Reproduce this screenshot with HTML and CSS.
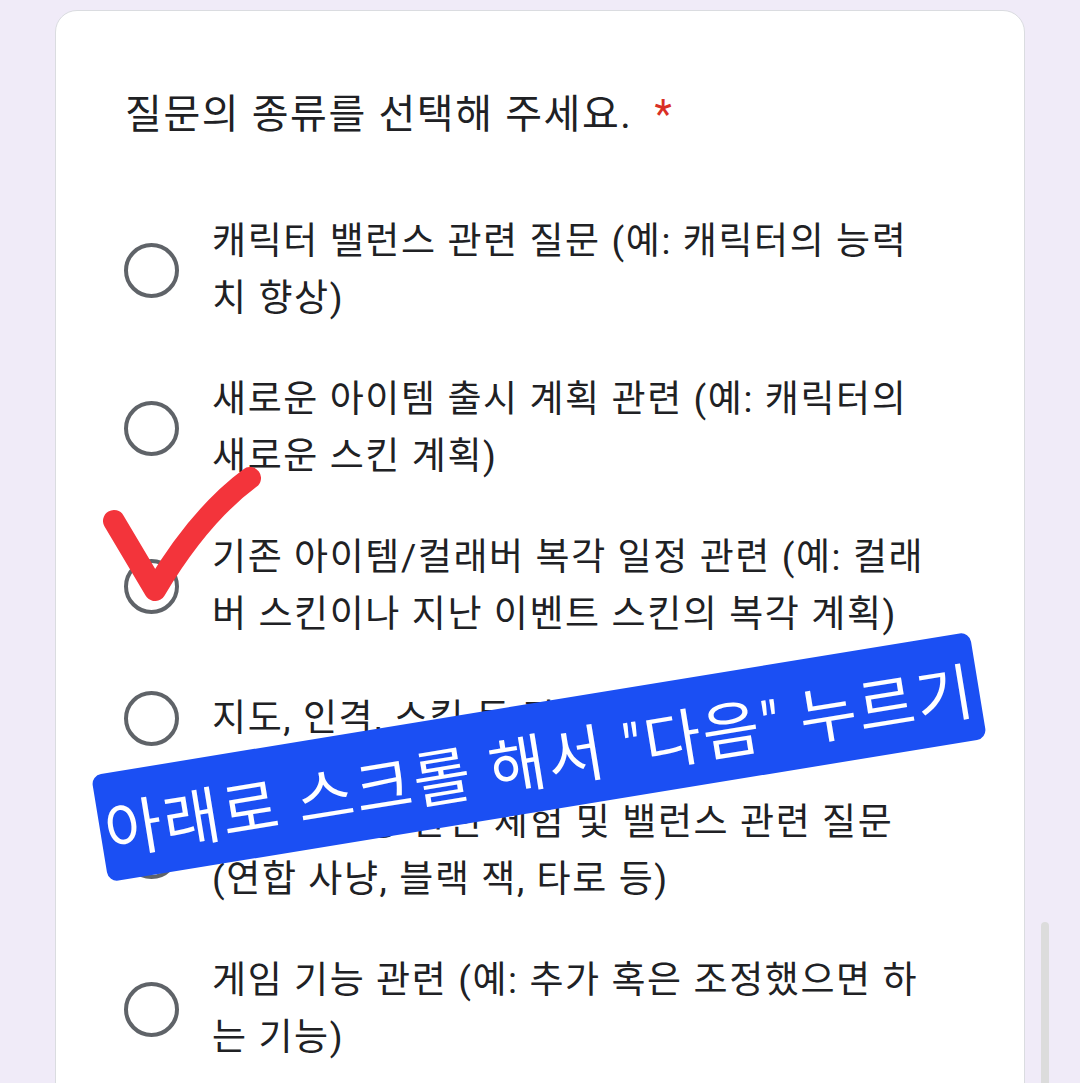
FILE: index.html
```html
<!DOCTYPE html>
<html lang="ko">
<head>
    <meta charset="UTF-8">
    <meta name="viewport" content="width=device-width, initial-scale=1.0">
    <title>질문 종류 선택</title>
    <link rel="stylesheet" href="styles.css">
</head>
<body>
    <div class="page">
        <div class="card">
            <div class="question-title">
                질문의 종류를 선택해 주세요.<span class="required">*</span>
            </div>

            <div class="options">
                <label class="option">
                    <span class="radio"></span>
                    <span class="option-text">캐릭터 밸런스 관련 질문 (예: 캐릭터의 능력치 향상)</span>
                </label>
                <label class="option">
                    <span class="radio"></span>
                    <span class="option-text">새로운 아이템 출시 계획 관련 (예: 캐릭터의 새로운 스킨 계획)</span>
                </label>
                <label class="option">
                    <span class="radio"></span>
                    <span class="option-text">기존 아이템/컬래버 복각 일정 관련 (예: 컬래버 스킨이나 지난 이벤트 스킨의 복각 계획)</span>
                </label>
                <label class="option">
                    <span class="radio"></span>
                    <span class="option-text">지도, 인격, 스킬 등 관련 질문</span>
                </label>
                <label class="option">
                    <span class="radio"></span>
                    <span class="option-text">미니게임 등 관련 체험 및 밸런스 관련 질문 (연합 사냥, 블랙 잭, 타로 등)</span>
                </label>
                <label class="option">
                    <span class="radio"></span>
                    <span class="option-text">게임 기능 관련 (예: 추가 혹은 조정했으면 하는 기능)</span>
                </label>
            </div>
        </div>

        <!-- 손으로 그린 체크 표시 -->
        <svg class="check-mark" width="300" height="200" viewBox="0 0 300 200">
            <path d="M114 71 L155 140 C 180 98, 212 56, 250 28"
                  fill="none" stroke="#f3343b" stroke-width="22" stroke-linecap="round" stroke-linejoin="round"/>
        </svg>

        <!-- 안내 배너 -->
        <div class="banner">아래로 스크롤 해서 "다음" 누르기</div>

        <div class="scrollbar"></div>
    </div>
</body>
</html>
```

FILE: styles.css
```css
* {
    margin: 0;
    padding: 0;
    box-sizing: border-box;
}

body {
    font-family: Roboto, "Noto Sans CJK KR", sans-serif;
    background-color: #f0ebf8;
    color: #202124;
    overflow: hidden;
}

.page {
    position: relative;
    width: 1080px;
    height: 1083px;
    overflow: hidden;
}

.card {
    margin: 10px 0 0 55px;
    width: 970px;
    height: 1200px;
    background-color: #fff;
    border: 1px solid #dadce0;
    border-radius: 22px;
    padding: 76px 96px 0 68px;
}

.question-title {
    font-size: 40px;
    line-height: 56px;
    letter-spacing: 1.6px;
    padding-left: 1px;
}

.required {
    color: #d93025;
    margin-left: 22px;
}

.options {
    display: flex;
    flex-direction: column;
    gap: 44px;
    margin-top: 70px;
}

.option {
    display: flex;
    align-items: center;
    gap: 33px;
    min-height: 63px;
}

.radio {
    flex: 0 0 55px;
    width: 55px;
    height: 55px;
    border: 4.5px solid #5f6368;
    border-radius: 50%;
}

.option-text {
    font-size: 37px;
    line-height: 57px;
    letter-spacing: 1.6px;
}

.check-mark {
    position: absolute;
    left: 0;
    top: 450px;
    filter: blur(0.6px);
}

.banner {
    position: absolute;
    left: 94px;
    top: 703px;
    width: 890px;
    height: 108px;
    background-color: #1b4ff3;
    border-radius: 10px;
    transform: rotate(-9.3deg);
    display: flex;
    align-items: center;
    justify-content: center;
    color: #fff;
    font-size: 62px;
    letter-spacing: 2px;
    white-space: nowrap;
}

.scrollbar {
    position: absolute;
    left: 1041px;
    top: 922px;
    width: 8px;
    height: 200px;
    background-color: #dcdcdc;
    border-radius: 4px;
}
```
